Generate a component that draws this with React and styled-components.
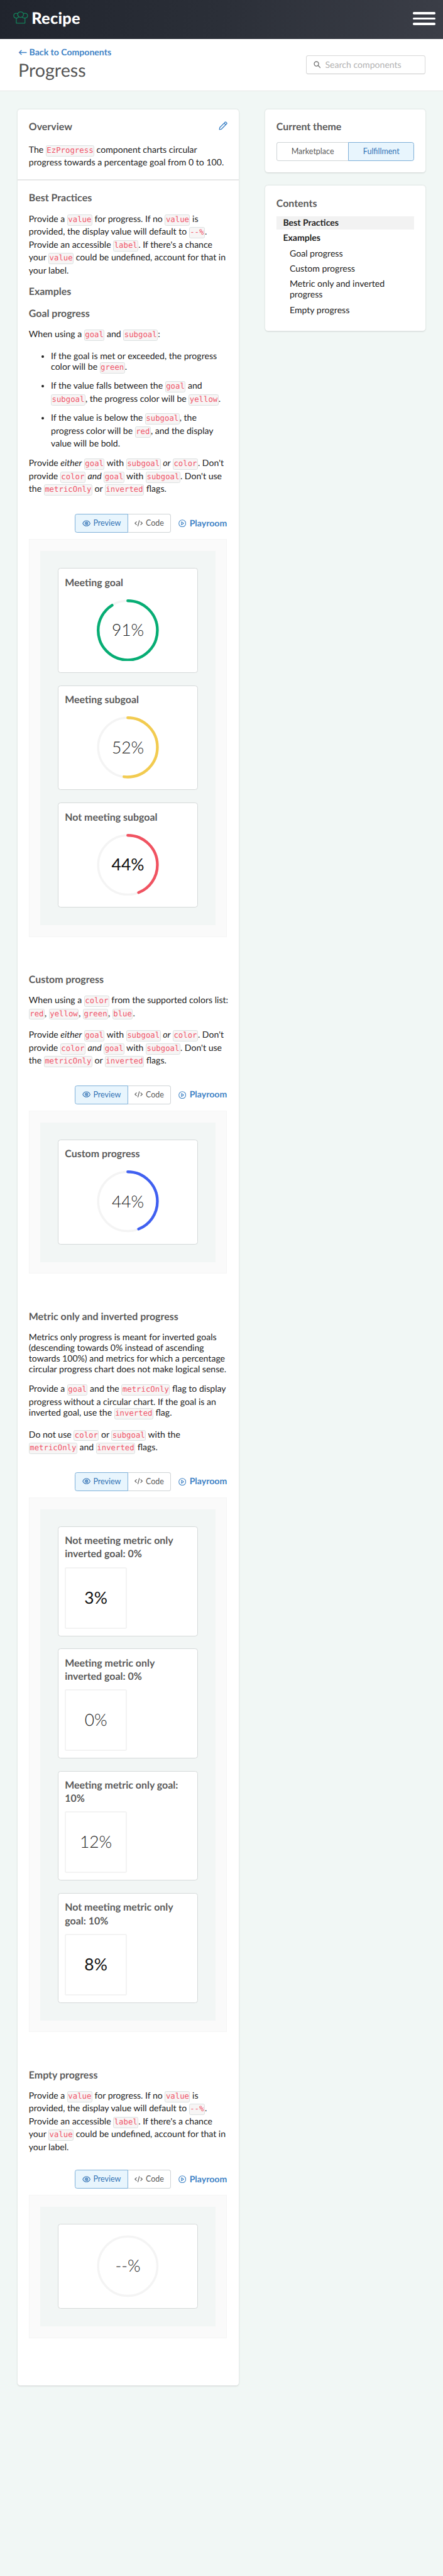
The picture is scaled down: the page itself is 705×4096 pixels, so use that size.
import React from "react";
import styled, { createGlobalStyle, css } from "styled-components";

/* 1rem is ten design pixels. */
const GlobalStyle = createGlobalStyle`
  *, *::before, *::after { box-sizing: border-box; }
  html { font-size: 8.81px; }
  body {
    margin: 0;
    background: #f1f7f5;
    color: #222;
    font-family: Lato, "Liberation Sans", sans-serif;
    font-size: 1.6rem;
    line-height: 1.94rem;
    text-rendering: geometricPrecision;
  }
`;

const Page = styled.div`
  width: 100%;
  min-height: 4096px;
  background: #f1f7f5;
`;

const TopBar = styled.header`
  display: flex;
  align-items: center;
  justify-content: space-between;
  height: 7rem;
  padding: 0 1.4rem 0 2.4rem;
  background: linear-gradient(100deg, #20242d 0%, #2b2f38 50%, #3b3e47 100%);
`;

const Brand = styled.a`
  display: flex;
  align-items: center;
  gap: 0.6rem;
  color: #fff;
  font-size: 2.88rem;
  font-weight: 900;
  line-height: 3.2rem;
  letter-spacing: 0.03rem;
  padding-bottom: 0.5rem;

  svg {
    width: 2.7rem;
    height: 2.4rem;
  }
`;

const MenuButton = styled.button`
  display: flex;
  flex-direction: column;
  gap: 0.55rem;
  padding: 0;
  margin-top: -0.3rem;
  border: 0;
  background: none;

  span {
    width: 4.1rem;
    height: 0.45rem;
    border-radius: 0.2rem;
    background: #fff;
  }
`;

const PageHeader = styled.div`
  display: flex;
  align-items: center;
  justify-content: space-between;
  height: 9.5rem;
  padding: 0 3.2rem 0 3.3rem;
  background: #fff;
  border-bottom: 0.2rem solid #e6e8e8;
`;

const TitleBlock = styled.div`
  padding-bottom: 0.3rem;
`;

const BackLink = styled.a`
  display: block;
  color: #3f83c6;
  font-size: 1.6rem;
  font-weight: 700;
  line-height: 2.4rem;
`;

const PageTitle = styled.h1`
  margin: 0;
  color: #565656;
  font-size: 3.25rem;
  font-weight: 400;
  line-height: 4rem;
`;

const SearchBox = styled.label`
  display: flex;
  align-items: center;
  gap: 0.8rem;
  width: 21.5rem;
  height: 3.4rem;
  padding: 0.2rem 1.2rem 0;
  border: 1px solid #d8d8d8;
  border-bottom-color: #c8c8c8;
  border-radius: 0.4rem;
  color: #b2b2b2;

  svg {
    width: 1.3rem;
    height: 1.3rem;
    margin-bottom: 0.2rem;
    color: #777;
  }
`;

const Columns = styled.main`
  display: grid;
  grid-template-columns: 39.9rem 28.9rem;
  justify-content: space-between;
  align-items: start;
  padding: 3.2rem 3.2rem 0;
`;

const Panel = styled.section`
  background: #fff;
  border-radius: 0.5rem;
  box-shadow: 0 0.1rem 0.3rem rgba(0, 0, 0, 0.15);
`;

const SideColumn = styled.aside`
  display: grid;
  gap: 2.4rem;
`;

const SidePanel = styled(Panel)`
  padding: 2rem 2rem ${(p) => p.$bottom ?? 2}rem;
`;

const Section = styled.div`
  padding: 2rem;
`;

const Divider = styled.hr`
  height: 0.2rem;
  margin: 0;
  border: 0;
  background: #e6e7e7;
`;

const HeadingRow = styled.div`
  display: flex;
  justify-content: space-between;
  align-items: flex-start;
  margin-bottom: 2rem;

  svg {
    width: 1.6rem;
    height: 1.6rem;
    margin-top: 0.2rem;
    color: #3f83c6;
  }
`;

const Heading = styled.h2`
  margin: 0 0 ${(p) => p.$gap ?? 1.6}rem;
  color: #5a5a5a;
  font-size: 1.81rem;
  font-weight: 700;
  line-height: 2.4rem;
`;

const Paragraph = styled.p`
  margin: 0 ${(p) => (p.$wide ? -0.5 : 0)}rem ${(p) => p.$gap ?? 1.6}rem 0;
`;

const Code = styled.code`
  display: inline-block;
  margin-bottom: 0.187rem;
  padding: 0 0.05rem;
  border: 1px solid #dce1e1;
  border-radius: 0.3rem;
  background: #f7f5f5;
  color: #f0566a;
  font-family: "DejaVu Sans Mono", "Liberation Mono", monospace;
  font-size: 1.4rem;
  line-height: 1.8rem;
`;

const BulletList = styled.ul`
  display: grid;
  gap: 1.12rem;
  margin: 0 0 1.6rem;
  padding-left: 4rem;
`;

const ExampleTools = styled.div`
  display: flex;
  justify-content: flex-end;
  align-items: center;
  gap: 1.35rem;
  margin: 3.1rem 0.1rem 1.15rem 0;
`;

const SegmentGroup = styled.div`
  display: flex;
  height: 3.4rem;
`;

const Segment = styled.button`
  display: flex;
  align-items: center;
  justify-content: center;
  gap: 0.5rem;
  width: ${(p) => p.$width}rem;
  padding: 0 0 0.1rem;
  border: 1px solid #cfd4d6;
  border-radius: ${(p) => (p.$last ? "0 0.4rem 0.4rem 0" : "0.4rem 0 0 0.4rem")};
  background: #fff;
  color: #5c5c5c;
  font-family: inherit;
  font-size: 1.42rem;
  line-height: 1.8rem;

  ${(p) => (p.$last ? css`border-left-width: 0;` : css`border-right-width: 0;`)}

  ${(p) =>
    p.$active &&
    css`
      border: 1px solid #7fb0d8;
      background: #e8f5fd;
      color: #3373b5;
    `}

  svg {
    flex: none;
    width: 1.5rem;
    height: 1.4rem;
  }
`;

const PlayroomLink = styled.a`
  display: flex;
  align-items: center;
  gap: 0.6rem;
  color: #3f83c6;
  font-weight: 700;

  svg {
    width: 1.4rem;
    height: 1.4rem;
  }
`;

const Stage = styled.div`
  padding: 2rem;
  margin: 0 0.1rem 6.5rem 0;
  border: 0.1rem solid #f5f5f5;
  background: #fafafa;
`;

const Canvas = styled.div`
  display: grid;
  gap: 2.24rem;
  padding: 3.1rem 3.1rem 3.2rem;
  background: #f2f6f5;
`;

const DemoCard = styled.article`
  padding: ${(p) => (p.$metric ? "1.3rem 1.2rem 1.25rem" : "1.3rem 1.2rem 2rem")};
  border: 1px solid #d5d9d9;
  border-radius: 0.5rem;
  background: #fff;
`;

const BareDemoCard = styled(DemoCard)`
  padding: 1.9rem 1.2rem 2rem;
`;

const DemoTitle = styled.h3`
  margin: 0 0 ${(p) => (p.$metric ? 1.15 : 1.8)}rem;
  color: #5a5a5a;
  font-size: 1.81rem;
  font-weight: 700;
  line-height: 2.4rem;
`;

const Dial = styled.div`
  display: grid;
  place-items: center;
  height: 11.2rem;

  > * { grid-area: 1 / 1; }

  svg {
    width: 11.2rem;
    height: 11.2rem;
  }
`;

const Metric = styled.div`
  display: grid;
  place-items: center;
  width: 11.2rem;
  height: 11.1rem;
  border: 2px solid #f3f3f3;
  border-radius: 0.3rem;
`;

const Value = styled.span`
  color: ${(p) => (p.$strong ? "#111" : "#222")};
  font-size: 3rem;
  font-weight: ${(p) => (p.$strong ? 400 : 300)};
  line-height: 3.6rem;
`;

const ContentsList = styled.nav`
  display: flex;
  flex-direction: column;
  margin-top: -0.2rem;
`;

const ContentsItem = styled.a`
  padding: 0.4rem 1.2rem 0.42rem ${(p) => (p.$nested ? 2.4 : 1.2)}rem;
  font-weight: ${(p) => (p.$nested ? 400 : 700)};
  ${(p) =>
    p.$current &&
    css`
      margin-bottom: 0.2rem;
      padding-top: 0.2rem;
      padding-bottom: 0.2rem;
      background: #f2f2f2;
    `}
`;

const ChefHat = () => (
  <svg viewBox="0 0 27 24" fill="none" stroke="#14805a" strokeWidth="1.5" strokeLinejoin="round" strokeLinecap="round">
    <path d="M5.6 11.9V21.4h15.6V11.9" />
    <path d="M5.6 12.3C2.7 12.2 1 10.200 1 7.800 1 5 3.200 3.200 5.800 3.500 7 3.600 7.700 4 8.300 4.600 8.800 2.300 10.800 1 13.400 1s4.600 1.300 5.200 3.600c.6-.6 1.400-1 2.500-1.100C23.800 3.200 26 5 26 7.800c0 2.400-1.700 4.400-4.800 4.500" />
    <path d="M8.300 4.600c-.5 1.900.2 3.800 1.700 5 1.600 1.300 4 1.500 5.700.6 2.100-1.100 3.200-3.400 2.900-5.600M5.600 12.300c1.900.1 3.400-.8 4.400-2.700M21.200 12.300c-2.300 0-4.300-.6-5.500-2.100" />
  </svg>
);

const SearchIcon = () => (
  <svg viewBox="0 0 14 14" fill="none" stroke="currentColor" strokeWidth="1.7" strokeLinecap="round">
    <circle cx="5.600" cy="5.600" r="4.300" />
    <path d="M8.900 8.900 12.900 12.900" />
  </svg>
);

const PencilIcon = () => (
  <svg viewBox="0 0 16 16" fill="none" stroke="currentColor" strokeWidth="1.500" strokeLinejoin="round">
    <path d="M1.400 14.600 2 11 11.700 1.500q.7-.7 1.400 0l1.400 1.400q.7.7 0 1.400L5 14Z" />
    <path d="M10 3.300 12.800 6" />
  </svg>
);

const EyeIcon = () => (
  <svg viewBox="0 0 15 14" fill="none" stroke="currentColor" strokeWidth="1.200">
    <path d="M.9 7C2.300 4 4.600 2.300 7.500 2.300S12.700 4 14.100 7c-1.400 3-3.700 4.700-6.600 4.700S2.300 10 .9 7Z" />
    <circle cx="7.500" cy="7" r="2.500" />
    <circle cx="7.500" cy="7" r=".6" />
  </svg>
);

const CodeIcon = () => (
  <svg viewBox="0 0 15 14" fill="none" stroke="currentColor" strokeWidth="1.300">
    <path d="M4 3.800.9 6.800 4 9.800M11 3.800l3.100 3L11 9.800M8.900 1.500 6.100 12.200" />
  </svg>
);

const PlayIcon = () => (
  <svg viewBox="0 0 14 14" fill="none" stroke="currentColor" strokeWidth="1.200" strokeLinejoin="round">
    <circle cx="7" cy="7" r="6.200" />
    <path d="M5.500 4.300v5.400L9.600 7Z" />
  </svg>
);

const RADIUS = 53.5;
const LENGTH = 2 * Math.PI * RADIUS;

function CircularProgress({ percent, color, strong }) {
  return (
    <Dial>
      <svg viewBox="0 0 112 112" fill="none">
        <circle cx="56" cy="56" r={RADIUS} stroke="#f4f4f4" strokeWidth="4" />
        {percent != null && (
          <circle
            cx="56"
            cy="56"
            r={RADIUS}
            stroke={color}
            strokeWidth="5"
            strokeLinecap="round"
            strokeDasharray={`${(percent / 100) * LENGTH} ${LENGTH}`}
            transform="rotate(-90 56 56)"
          />
        )}
      </svg>
      <Value $strong={strong}>{percent != null ? percent : "--"}%</Value>
    </Dial>
  );
}

function ProgressCard({ title, ...rest }) {
  return (
    <DemoCard>
      <DemoTitle>{title}</DemoTitle>
      <CircularProgress {...rest} />
    </DemoCard>
  );
}

function MetricCard({ title, value, strong }) {
  return (
    <DemoCard $metric>
      <DemoTitle $metric>{title}</DemoTitle>
      <Metric>
        <Value $strong={strong}>{value}</Value>
      </Metric>
    </DemoCard>
  );
}

function Example({ children }) {
  return (
    <>
      <ExampleTools>
        <SegmentGroup>
          <Segment $active $width={9.7}>
            <EyeIcon />
            Preview
          </Segment>
          <Segment $last $width={7.7}>
            <CodeIcon />
            Code
          </Segment>
        </SegmentGroup>
        <PlayroomLink>
          <PlayIcon />
          Playroom
        </PlayroomLink>
      </ExampleTools>
      <Stage>
        <Canvas>{children}</Canvas>
      </Stage>
    </>
  );
}

const ValueGuidance = ({ gap }) => (
  <Paragraph $gap={gap}>
    Provide a <Code>value</Code> for progress. If no <Code>value</Code> is provided, the display
    value will default to <Code>--%</Code>. Provide an accessible <Code>label</Code>. If there's a
    chance your <Code>value</Code> could be undefined, account for that in your label.
  </Paragraph>
);

const FlagGuidance = () => (
  <Paragraph $gap={0}>
    Provide <em>either</em> <Code>goal</Code> with <Code>subgoal</Code> <em>or</em>{" "}
    <Code>color</Code>. Don't provide <Code>color</Code> <em>and</em> <Code>goal</Code> with{" "}
    <Code>subgoal</Code>. Don't use the <Code>metricOnly</Code> or <Code>inverted</Code> flags.
  </Paragraph>
);

export default function App() {
  return (
    <Page>
      <GlobalStyle />
      <TopBar>
        <Brand>
          <ChefHat />
          Recipe
        </Brand>
        <MenuButton aria-label="Menu">
          <span />
          <span />
          <span />
        </MenuButton>
      </TopBar>
      <PageHeader>
        <TitleBlock>
          <BackLink>← Back to Components</BackLink>
          <PageTitle>Progress</PageTitle>
        </TitleBlock>
        <SearchBox>
          <SearchIcon />
          Search components
        </SearchBox>
      </PageHeader>
      <Columns>
        <Panel>
          <Section>
            <HeadingRow>
              <Heading $gap={0}>Overview</Heading>
              <PencilIcon />
            </HeadingRow>
            <Paragraph $gap={0}>
              The <Code>EzProgress</Code> component charts circular progress towards a percentage
              goal from 0 to 100.
            </Paragraph>
          </Section>
          <Divider />
          <Section>
            <Heading>Best Practices</Heading>
            <ValueGuidance />
            <Heading>Examples</Heading>
            <Heading>Goal progress</Heading>
            <Paragraph>
              When using a <Code>goal</Code> and <Code>subgoal</Code>:
            </Paragraph>
            <BulletList>
              <li>
                If the goal is met or exceeded, the progress color will be <Code>green</Code>.
              </li>
              <li>
                If the value falls between the <Code>goal</Code> and <Code>subgoal</Code>, the
                progress color will be <Code>yellow</Code>.
              </li>
              <li>
                If the value is below the <Code>subgoal</Code>, the progress color will be{" "}
                <Code>red</Code>, and the display value will be bold.
              </li>
            </BulletList>
            <FlagGuidance />
            <Example>
              <ProgressCard title="Meeting goal" percent={91} color="#07ad74" />
              <ProgressCard title="Meeting subgoal" percent={52} color="#f2cb50" />
              <ProgressCard title="Not meeting subgoal" percent={44} color="#f05361" strong />
            </Example>
            <Heading>Custom progress</Heading>
            <Paragraph $wide>
              When using a <Code>color</Code> from the supported colors list: <Code>red</Code>,{" "}
              <Code>yellow</Code>, <Code>green</Code>, <Code>blue</Code>.
            </Paragraph>
            <FlagGuidance />
            <Example>
              <ProgressCard title="Custom progress" percent={44} color="#4060f0" />
            </Example>
            <Heading>Metric only and inverted progress</Heading>
            <Paragraph>
              Metrics only progress is meant for inverted goals (descending towards 0% instead of
              ascending towards 100%) and metrics for which a percentage circular progress chart
              does not make logical sense.
            </Paragraph>
            <Paragraph>
              Provide a <Code>goal</Code> and the <Code>metricOnly</Code> flag to display progress
              without a circular chart. If the goal is an inverted goal, use the{" "}
              <Code>inverted</Code> flag.
            </Paragraph>
            <Paragraph $gap={0}>
              Do not use <Code>color</Code> or <Code>subgoal</Code> with the{" "}
              <Code>metricOnly</Code> and <Code>inverted</Code> flags.
            </Paragraph>
            <Example>
              <MetricCard title="Not meeting metric only inverted goal: 0%" value="3%" strong />
              <MetricCard title="Meeting metric only inverted goal: 0%" value="0%" />
              <MetricCard title="Meeting metric only goal: 10%" value="12%" />
              <MetricCard title="Not meeting metric only goal: 10%" value="8%" strong />
            </Example>
            <Heading>Empty progress</Heading>
            <ValueGuidance gap={0} />
            <Example>
              <BareDemoCard>
                <CircularProgress />
              </BareDemoCard>
            </Example>
          </Section>
        </Panel>
        <SideColumn>
          <SidePanel>
            <Heading>Current theme</Heading>
            <SegmentGroup>
              <Segment $width={13}>Marketplace</Segment>
              <Segment $last $active $width={11.9}>
                Fulfillment
              </Segment>
            </SegmentGroup>
          </SidePanel>
          <SidePanel $bottom={2.3}>
            <Heading $gap={1.4}>Contents</Heading>
            <ContentsList>
              <ContentsItem $current>Best Practices</ContentsItem>
              <ContentsItem>Examples</ContentsItem>
              <ContentsItem $nested>Goal progress</ContentsItem>
              <ContentsItem $nested>Custom progress</ContentsItem>
              <ContentsItem $nested>Metric only and inverted progress</ContentsItem>
              <ContentsItem $nested>Empty progress</ContentsItem>
            </ContentsList>
          </SidePanel>
        </SideColumn>
      </Columns>
    </Page>
  );
}
